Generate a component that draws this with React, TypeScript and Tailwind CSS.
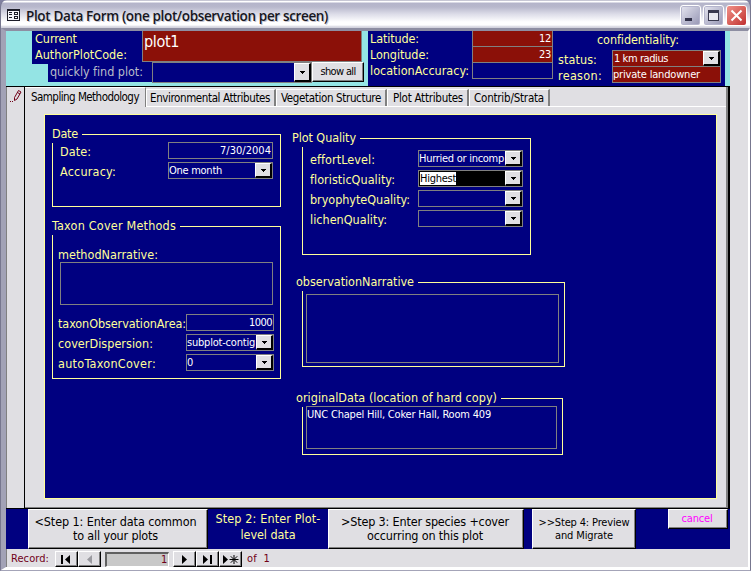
import { useLayoutEffect, useRef, type ReactNode } from 'react';

/* Single line of text whose tracking is computed so that it spans `w` pixels. */
function T({ w, children, className = '' }: { w: number; children: string; className?: string }) {
  const ref = useRef<HTMLSpanElement>(null);
  useLayoutEffect(() => {
    const el = ref.current;
    if (!el) return;
    el.style.letterSpacing = '0px';
    const natural = el.getBoundingClientRect().width;
    el.style.letterSpacing = `${(w - natural) / children.length}px`;
  }, [w, children]);
  return (
    <span ref={ref} className={`inline-block shrink-0 whitespace-pre ${className}`}>
      {children}
    </span>
  );
}

const small = 'text-[11px] leading-[15px] text-white';

function Arrow() {
  return (
    <span className="flex h-full w-[17px] shrink-0 items-center justify-center border-t border-l border-r-2 border-b-2 border-t-white border-l-white border-r-black border-b-black bg-[#e0dfe3]">
      <svg width="5" height="3" shapeRendering="crispEdges">
        <path d="M0 0h5v1H4v1H3v1H2V2H1V1H0z" fill="#000" />
      </svg>
    </span>
  );
}

function Combo({ children, className = '' }: { children?: ReactNode; className?: string }) {
  return (
    <div className={`flex h-[17px] shrink-0 border border-[#808080] ${className}`}>
      <div className={`min-w-0 flex-1 overflow-hidden ${small}`}>{children}</div>
      <Arrow />
    </div>
  );
}

function Group({ title, titleW, titleClass, className, children }: { title: string; titleW: number; titleClass: string; className: string; children?: ReactNode }) {
  return (
    <section className={`relative border border-[#ffff99] ${className}`}>
      <h2 className={`absolute -top-[9px] h-[17px] bg-[#000080] text-[12.5px] leading-[15px] ${titleClass}`}>
        <T w={titleW}>{title}</T>
      </h2>
      {children}
    </section>
  );
}

function Row({ label, w, children }: { label: string; w: number; children: ReactNode }) {
  return (
    <div className="mb-[3px] flex h-[17px] justify-between">
      <div className="mt-px h-[17px] text-[12.5px] leading-[18px]">
        <T w={w}>{label}</T>
      </div>
      {children}
    </div>
  );
}

function Tab({ label, w, className }: { label: string; w: number; className: string }) {
  return (
    <div className={`mt-[2px] h-[17px] shrink-0 border-t border-r-2 border-l border-t-white border-l-white border-r-[#808080] text-[11.5px] leading-[16px] ${className}`}>
      <T w={w}>{label}</T>
    </div>
  );
}

const raised = 'border-t border-l border-t-white border-l-white shadow-[inset_-1px_-1px_0_#808080] border-r border-b border-r-black border-b-black bg-[#e0dfe3] text-black';

function NavButton({ children }: { children: ReactNode }) {
  return (
    <button className={`flex h-4 w-[23px] shrink-0 items-center justify-center ${raised}`}>
      <svg width="18" height="11" viewBox="0 0 18 11">{children}</svg>
    </button>
  );
}

function TitleBar() {
  return (
    <header className="flex h-7 shrink-0 items-start bg-[linear-gradient(#8f8fa9_0px,#ffffff_1px,#ffffff_2px,#b4b4ca_3px,#b8b8cc_7px,#dcdce8_14px,#ffffff_22px,#ffffff_25px,#d4d4de_27px)] pl-[6px]">
      <svg className="mt-[9px] shrink-0" width="13" height="12" shapeRendering="crispEdges">
        <path d="M0 0h13v12H0z" fill="#1c1c28" />
        <path d="M1 2h11v9H1z" fill="#f4f4fa" />
        <path d="M2 3h3v1H2zM2 5h3v1H2zM2 8h3v1H2zM7 3h4v3H7zM7 7h4v3H7z" fill="#1c1c28" />
        <path d="M8 4h2v1H8zM8 8h2v1H8z" fill="#fff" />
      </svg>
      <h1 className="mt-[6px] ml-[6px] flex-1 font-['Open_Sans','Noto_Sans',sans-serif] text-[13.5px] leading-5 font-semibold text-[#16161e] [text-shadow:1px_1px_0_#c4c4d0]">
        <T w={302}>Plot Data Form (one plot/observation per screen)</T>
      </h1>
      <div className="mt-[5px] mr-[3px] flex gap-[2px]">
        <span className="h-[21px] w-[21px] rounded-[3px] border border-white bg-linear-to-br from-[#e6e6f0] to-[#9696b4] shadow-[inset_0_0_0_1px_#b4b4cc]">
          <span className="mt-[12px] ml-[4px] block h-[3px] w-[7px] bg-[#303048]" />
        </span>
        <span className="h-[21px] w-[21px] rounded-[3px] border border-white bg-linear-to-br from-[#e6e6f0] to-[#9696b4] shadow-[inset_0_0_0_1px_#b4b4cc]">
          <span className="mt-[4px] ml-[4px] block h-[11px] w-[11px] border border-t-[3px] border-[#38384e] bg-[#e8e8f0]" />
        </span>
        <span className="flex h-[21px] w-[21px] items-center justify-center rounded-[3px] border border-white bg-linear-to-br from-[#f09088] to-[#c02c30]">
          <svg width="13" height="13">
            <path d="M1.5 1.5l10 10M11.5 1.5l-10 10" stroke="#fff" strokeWidth="2" />
          </svg>
        </span>
      </div>
    </header>
  );
}

function FormHeader() {
  return (
    <div className="flex h-[55px] w-[724px] bg-[#94e4e4] text-[12.5px] leading-4 text-[#ffff99]">
      <div className="w-[362px] shrink-0">
        <div className="flex h-[31px] pl-[26px]">
          <div className="h-[33px] w-[110px] shrink-0 bg-[#000080] pl-[3px]">
            <div className="h-4"><T w={42}>Current</T></div>
            <div className="h-4"><T w={92}>AuthorPlotCode:</T></div>
          </div>
          <div className="flex-1 border-x border-b border-[#808080] bg-[#8b1008] pl-px text-[16px] leading-[21px] text-white">
            <T w={35}>plot1</T>
          </div>
          <div className="w-[6px]" />
        </div>
        <div className="flex h-5 pl-[42px]">
          <div className="h-5 w-[104px] shrink-0 bg-[#000080] pl-[2px] leading-[19px] text-[#b8bcc8]">
            <T w={93}>quickly find plot:</T>
          </div>
          <Combo className="h-[21px] w-[160px] bg-[#000080]" />
          <button className={`h-5 w-[52px] shrink-0 text-[11px] leading-[18px] ${raised}`}>
            <T w={35}>show all</T>
          </button>
        </div>
      </div>
      <div className="flex w-[357px] bg-[#000080]">
        <div className="h-[55px] w-[104px] shrink-0 pl-[2px]">
          <div className="h-4"><T w={49}>Latitude:</T></div>
          <div className="h-4"><T w={59}>Longitude:</T></div>
          <div className="h-4"><T w={99}>locationAccuracy:</T></div>
        </div>
        <div className={`w-[81px] shrink-0 text-right ${small}`}>
          <div className="h-4 border-x border-b border-[#808080] bg-[#8b1008] pr-px"><T w={12}>12</T></div>
          <div className="h-4 border-x border-b border-[#808080] bg-[#8b1008] pr-px"><T w={12}>23</T></div>
          <div className="h-4 border-x border-b border-[#808080]" />
        </div>
        <div className="flex-1 pr-[4px] pl-[5px]">
          <div className="h-[19px] pt-px pl-[39px]"><T w={82}>confidentiality:</T></div>
          <div className="flex h-4 justify-between">
            <T w={39} className="leading-[19px]">status:</T>
            <Combo className="w-[109px] bg-[#8b1008]"><T w={54} className="ml-px">1 km radius</T></Combo>
          </div>
          <div className="flex h-4 justify-between">
            <T w={44} className="leading-[19px]">reason:</T>
            <div className={`h-[17px] w-[109px] border border-[#808080] bg-[#8b1008] ${small}`}><T w={87}>private landowner</T></div>
          </div>
        </div>
      </div>
    </div>
  );
}

function Methodology() {
  return (
    <div className="mt-[7px] ml-[19px] flex h-[385px] w-[673px] border border-[#ffff99] bg-[#000080] text-[#ffff99]">
      <div className="w-[257px] shrink-0 pt-[19px] pl-[7px]">
        <Group title="Date" titleW={26} titleClass="-left-px w-[30px]" className="h-[73px] w-[229px] pt-[7px] pr-[7px] pl-[7px]">
          <Row label="Date:" w={31}>
            <div className={`h-[17px] w-[105px] border border-[#808080] pr-px text-right ${small}`}><T w={51}>7/30/2004</T></div>
          </Row>
          <Row label="Accuracy:" w={56}>
            <Combo className="w-[105px]"><T w={53}>One month</T></Combo>
          </Row>
        </Group>
        <Group title="Taxon Cover Methods" titleW={124} titleClass="-left-px w-[128px]" className="mt-[19px] h-[153px] w-[229px] pt-[20px] pr-[6px] pl-[5px]">
          <div className="h-[15px] text-[12.5px] leading-4"><T w={100}>methodNarrative:</T></div>
          <div className="mb-[9px] ml-[2px] h-[43px] w-[213px] border border-[#808080]" />
          <Row label="taxonObservationArea:" w={128}>
            <div className={`h-[17px] w-[88px] border border-[#808080] pr-px text-right ${small}`}><T w={23}>1000</T></div>
          </Row>
          <Row label="coverDispersion:" w={95}>
            <Combo className="w-[88px]"><T w={68}>subplot-contig</T></Combo>
          </Row>
          <Row label="autoTaxonCover:" w={98}>
            <Combo className="w-[88px]"><T w={6}>0</T></Combo>
          </Row>
        </Group>
      </div>
      <div className="pt-[23px]">
        <Group title="Plot Quality" titleW={64} titleClass="-left-[11px] w-[68px]" className="h-[117px] w-[229px] pt-[11px] pr-[7px] pl-[7px]">
          <Row label="effortLevel:" w={65}>
            <Combo className="w-[105px]"><T w={85}>Hurried or incomp</T></Combo>
          </Row>
          <Row label="floristicQuality:" w={85}>
            <Combo className="w-[105px] bg-black"><T w={36} className="ml-px h-[13px] bg-white leading-[14px] text-black">Highest</T></Combo>
          </Row>
          <Row label="bryophyteQuality:" w={100}><Combo className="w-[105px]" /></Row>
          <Row label="lichenQuality:" w={77}><Combo className="w-[105px]" /></Row>
        </Group>
        <Group title="observationNarrative" titleW={118} titleClass="-left-[7px] w-[122px]" className="mt-[27px] h-[85px] w-[263px] pt-[11px] pl-[3px]">
          <div className="h-[69px] w-[253px] border border-[#808080]" />
        </Group>
        <Group title="originalData (location of hard copy)" titleW={201} titleClass="-left-[7px] w-[205px]" className="mt-[31px] h-[57px] w-[261px] pt-[7px] pl-[3px]">
          <div className={`relative h-[43px] w-[251px] border border-[#808080] ${small}`}><T w={184}>UNC Chapel Hill, Coker Hall, Room 409</T></div>
        </Group>
      </div>
    </div>
  );
}

function Steps() {
  return (
    <div className="flex h-10 w-[724px] items-start bg-[#000080] pl-[22px] text-center text-[12.5px] leading-[14px]">
      <button className={`h-10 w-[180px] pr-[5px] ${raised}`}>
        <T w={162}>&lt;Step 1: Enter data common</T>
        <T w={85}>to all your plots</T>
      </button>
      <div className="h-10 w-[120px] pt-[2px] leading-4 text-[#ffff99]">
        <T w={105}>Step 2: Enter Plot-</T>
        <T w={55}>level data</T>
      </div>
      <button className={`h-10 w-[196px] pr-[2px] ${raised}`}>
        <T w={168}>&gt;Step 3: Enter species +cover</T>
        <T w={116}>occurring on this plot</T>
      </button>
      <button className={`ml-2 h-10 w-[104px] text-[11px] leading-[13px] ${raised}`}>
        <T w={91}>&gt;&gt;Step 4: Preview</T>
        <T w={58}>and Migrate</T>
      </button>
      <button className={`ml-8 h-5 w-[60px] pr-[2px] text-[11px] leading-[18px] ${raised}`}>
        <T w={31} className="text-[#ff00ff]">cancel</T>
      </button>
    </div>
  );
}

function RecordBar() {
  return (
    <div className="flex h-[18px] items-start pt-[2px] pl-[5px] text-[11px] leading-[16px] text-[#700018]">
      <T w={38}>Record:</T>
      <div className="ml-[6px] flex">
        <NavButton><path d="M3 1h2v9H3zM12 1v9L7 5.5z" /></NavButton>
        <NavButton><path d="M11 1v9L6 5.5z" fill="#9a9aa0" /></NavButton>
      </div>
      <div className="mx-[4px] mt-px h-[15px] w-[64px] border-t-2 border-l-2 border-r border-b border-t-[#606060] border-l-[#606060] border-r-white border-b-white bg-[#c8c8c8] pr-px text-right leading-[12px]"><T w={6}>1</T></div>
      <div className="flex">
        <NavButton><path d="M6 1v9l5-4.5z" /></NavButton>
        <NavButton><path d="M4 1v9l5-4.5zM11 1h2v9h-2z" /></NavButton>
        <NavButton>
          <path d="M1 1v9l5-4.5z" />
          <path d="M12 1v9M7.5 5.5h9M8.8 2.3l6.4 6.4M15.2 2.3L8.8 8.7" stroke="#000" />
        </NavButton>
      </div>
      <T w={23} className="ml-[5px]">of  1</T>
    </div>
  );
}

export default function App() {
  return (
    <div className="h-[571px] w-[751px] overflow-hidden bg-[#8080a0] font-['DejaVu_Sans_Condensed','DejaVu_Sans',sans-serif]">
      <div className="flex h-[571px] flex-col overflow-hidden rounded-t-[7px] border-x border-b border-x-[#77778f] border-b-[#a4a4b8]">
        <TitleBar />
        <div className="flex min-h-0 flex-1 border-t-[3px] border-r-2 border-b-[3px] border-l-[5px] border-t-[#8e8ea2] border-r-white border-b-white border-l-[#a2a2b6] bg-[#e0dfe3] shadow-[inset_1px_0_0_#808080]">
          <div className="w-full">
            <FormHeader />
            <div className="flex h-[423px] w-[724px] border-t border-r-2 border-b border-black">
              <aside className="w-[19px] shrink-0 border-r border-black">
                <svg className="mt-[2px] ml-[3px]" width="13" height="15" fill="none" stroke="#700018">
                  <path d="M5.5 11.5v-3l4-7 2.500 1.500-4 7zM8.500 3.500l2.500 1.500" />
                  <path d="M1 12.500h1M3 12.500h1" />
                </svg>
              </aside>
              <div className="flex-1 border-r-2 border-b border-[#808080]">
                <nav className="flex h-5 text-black">
                  <div className="h-5 w-[121px] border-t border-r border-t-white border-r-[#808080] pl-[6px] text-[11.5px] leading-[18px]">
                    <T w={108}>Sampling Methodology</T>
                  </div>
                  <div className="flex flex-1 border-b border-white">
                    <Tab label="Environmental Attributes" w={120} className="w-[130px] pl-[3px]" />
                    <Tab label="Vegetation Structure" w={100} className="w-[111px] pl-[4px]" />
                    <Tab label="Plot Attributes" w={70} className="w-[82px] pl-[5px]" />
                    <Tab label="Contrib/Strata" w={70} className="w-[81px] pl-[4px]" />
                  </div>
                </nav>
                <Methodology />
              </div>
            </div>
            <Steps />
            <RecordBar />
          </div>
        </div>
      </div>
    </div>
  );
}
